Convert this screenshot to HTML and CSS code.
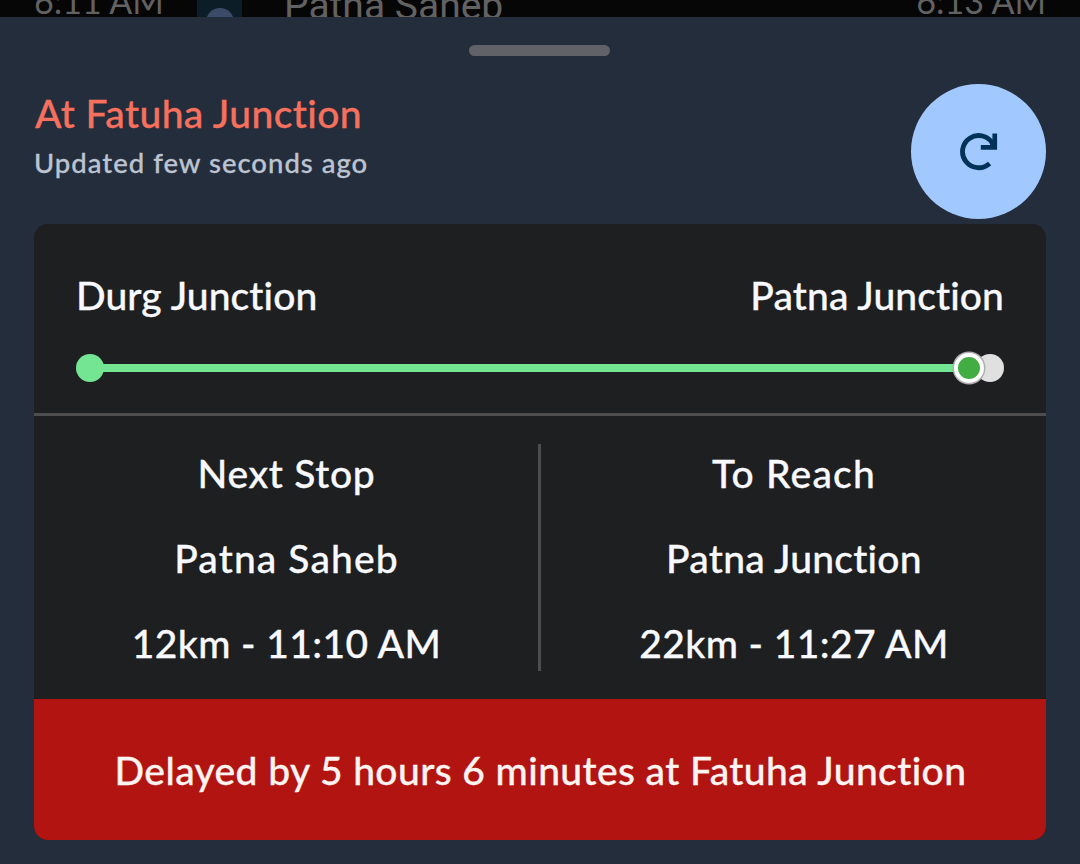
FILE: index.html
```
<!DOCTYPE html>
<html lang="en">

<head>
    <meta charset="UTF-8">
    <meta name="viewport" content="width=device-width, initial-scale=1.0">
    <title>Train Status</title>
    <link rel="stylesheet" href="styles.css">
</head>

<body>
    <!-- Timeline row behind the sheet -->
    <div class="timeline-row">
        <span class="time arrival">6:11 AM</span>
        <div class="track"><div class="stop-dot"></div></div>
        <span class="station">Patna Saheb</span>
        <span class="time departure">6:13 AM</span>
    </div>

    <div class="sheet">
        <div class="handle"></div>

        <div class="header">
            <div class="status">
                <div class="status-title">At Fatuha Junction</div>
                <div class="status-updated">Updated few seconds ago</div>
            </div>
            <button class="refresh" type="button" aria-label="Refresh">
                <svg width="40" height="40" viewBox="0 0 40 40">
                    <path d="M33.8 12 A16.1 16.1 0 1 0 30.6 31.4" fill="none" stroke="#003258" stroke-width="4.8"/>
                    <path d="M33.4 1.5H38.1V17.8H21.8V13.1H31.1L33.4 9Z" fill="#003258"/>
                </svg>
            </button>
        </div>

        <div class="card">
            <div class="route">
                <div class="route-names">
                    <span class="route-from">Durg Junction</span>
                    <span class="route-to">Patna Junction</span>
                </div>
                <div class="progress">
                    <div class="dot start"></div>
                    <div class="line"></div>
                    <div class="dot end"></div>
                    <div class="current"></div>
                </div>
            </div>

            <div class="stops">
                <div class="stop">
                    <div class="next-label">Next Stop</div>
                    <div class="next-name">Patna Saheb</div>
                    <div class="stop-info">12km - 11:10 AM</div>
                </div>
                <div class="stop">
                    <div class="reach-label">To Reach</div>
                    <div class="reach-name">Patna Junction</div>
                    <div class="stop-info">22km - 11:27 AM</div>
                </div>
            </div>

            <div class="delay">Delayed by 5 hours 6 minutes at Fatuha Junction</div>
        </div>
    </div>
</body>

</html>
```
FILE: styles.css
```
* {
    box-sizing: border-box;
}

body {
    margin: 0;
    width: 1080px;
    height: 864px;
    overflow: hidden;
    background: #060606;
    font-family: Lato, "Open Sans", sans-serif;
    font-weight: 500;
    font-size: 39px;
    font-variant-ligatures: none;
    color: #f8f9ff;
    white-space: nowrap;
}

.timeline-row {
    display: flex;
    align-items: flex-end;
    height: 17px;
    padding: 0 34px;
    overflow: hidden;
    color: #626262;
}

.time {
    font-size: 34px;
    line-height: 34px;
    margin-bottom: -1px;
    font-weight: 400;
}

.arrival {
    width: 163px;
}

.track {
    width: 45px;
    height: 17px;
    background: #0c1d27;
    overflow: hidden;
}

.stop-dot {
    width: 28px;
    height: 28px;
    margin: 8px auto 0;
    border-radius: 50%;
    background: #3b4a66;
}

.station {
    margin: 0 auto -8px 42px;
    font-family: Roboto, sans-serif;
    font-weight: 400;
    font-size: 39px;
    line-height: 38px;
}

.sheet {
    height: 847px;
    padding: 28px 34px 0;
    background: #242d3b;
    -webkit-text-stroke: 0.3px;
}

.handle {
    width: 141px;
    height: 11px;
    margin: 0 0 0 435px;
    border-radius: 6px;
    background: #616268;
}

.header {
    display: flex;
    justify-content: space-between;
    height: 168px;
    padding-top: 28px;
}

.status-title {
    margin-top: 4px;
    padding-left: 1px;
    line-height: 50px;
    letter-spacing: 0.4px;
    color: #f6705e;
}

.status-updated {
    margin-top: 5px;
    font-size: 27.5px;
    line-height: 40px;
    letter-spacing: 1px;
    color: #bcc3d1;
}

.refresh {
    display: flex;
    align-items: center;
    justify-content: center;
    width: 135px;
    height: 135px;
    padding: 0;
    border: none;
    border-radius: 50%;
    background: #a1c9ff;
}

.card {
    height: 616px;
    border-radius: 14px;
    background: #1e1f21;
    overflow: hidden;
}

.route {
    height: 192px;
    padding: 43px 42px 0;
    border-bottom: 3px solid #4d4d4d;
}

.route-names {
    display: flex;
    justify-content: space-between;
    line-height: 57px;
    letter-spacing: 0.1px;
}

.progress {
    position: relative;
    display: flex;
    align-items: center;
    height: 34px;
    margin-top: 27px;
}

.dot {
    width: 28px;
    height: 28px;
    border-radius: 50%;
}

.start {
    background: #74e592;
}

.end {
    background: #e0e0e0;
}

.line {
    flex: 1;
    height: 8px;
    margin: 0 -4px;
    background: #74e592;
}

/* train marker on top of the line */
.current {
    position: absolute;
    right: 20px;
    width: 30px;
    height: 30px;
    border: 4px solid #fff;
    border-radius: 50%;
    background: #42ad42;
    box-shadow: 0 0 0 1.5px #b0adb0;
}

.stops {
    display: grid;
    grid-template-columns: 507px 505px;
    padding: 28px 0;
}

.stop {
    display: grid;
    gap: 28px;
    padding-left: 1px;
    text-align: center;
    line-height: 57px;
}

.stop div {
    height: 57px;
    padding-top: 1px;
}

.stop:first-child {
    border-right: 3px solid #4d4d4d;
}

.next-label {
    letter-spacing: 0.7px;
}

.next-name {
    letter-spacing: 1.1px;
}

.reach-label {
    letter-spacing: 1.2px;
}

.reach-name {
    letter-spacing: 0.25px;
}

.stop-info {
    letter-spacing: 0.4px;
}

.delay {
    height: 141px;
    padding: 1px 0 0 1px;
    background: #b11411;
    line-height: 141px;
    letter-spacing: 0.4px;
    text-align: center;
    color: #fff4f2;
}
```
